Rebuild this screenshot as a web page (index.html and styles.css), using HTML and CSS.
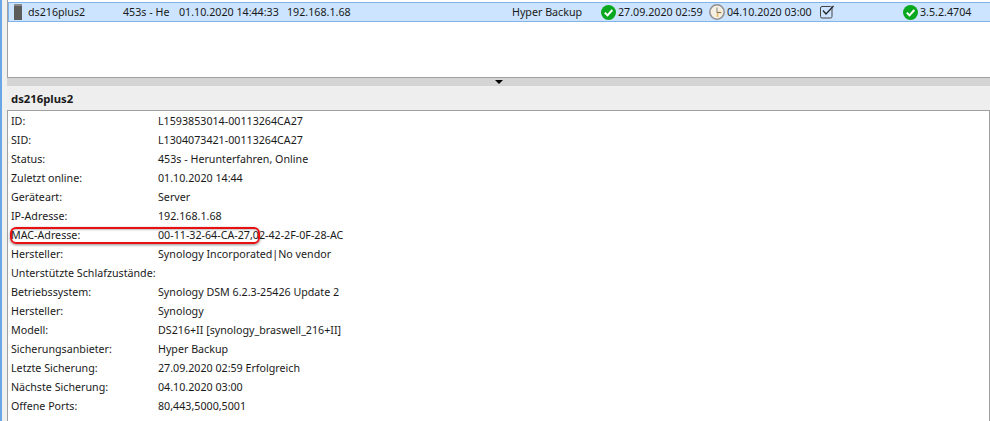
FILE: index.html
```html
<!DOCTYPE html>
<html lang="de">
<head>
  <meta charset="UTF-8" />
  <title>ds216plus2</title>
  <link rel="stylesheet" href="styles.css">
</head>
<body>
  <div class="app">
    <div class="list-panel">
      <div class="device-row">
        <span class="cell cell-name">
          <svg class="nas-icon" width="8" height="16" viewBox="0 0 8 16"><rect width="8" height="2" fill="#8a8a8a"/><rect y="2" width="8" height="14" fill="#5c5c5c"/></svg>
          ds216plus2
        </span>
        <span class="cell">453s - He</span>
        <span class="cell">01.10.2020 14:44:33</span>
        <span class="cell">192.168.1.68</span>
        <span class="cell">Hyper Backup</span>
        <span class="cell cell-icon">
          <svg width="15" height="15" viewBox="0 0 15 15"><circle cx="7.5" cy="7.5" r="7.5" fill="#0aa81e"/><path d="M3.8 7.6l2.7 2.8 4.8-5.4" fill="none" stroke="#fff" stroke-width="2"/></svg>
          27.09.2020 02:59
        </span>
        <span class="cell cell-icon">
          <svg width="16" height="16" viewBox="0 0 16 16"><circle cx="8" cy="8" r="7.2" fill="#f4efe2" stroke="#8f8f8f" stroke-width="1.5"/><path d="M8.5 8.5V13M8.5 8.5h4" fill="none" stroke="#e8b860" stroke-width="1.5"/><path d="M8 3.5v5h4" fill="none" stroke="#666" stroke-width="0.8"/></svg>
          04.10.2020 03:00
        </span>
        <span class="cell">
          <svg width="14" height="14" viewBox="0 0 14 14"><rect x="0.5" y="1.5" width="11.5" height="11.5" rx="1.5" fill="none" stroke="#444"/><path d="M3 5.5l3 3.5L13.5 1" fill="none" stroke="#222" stroke-width="1.2"/></svg>
        </span>
        <span class="cell cell-icon">
          <svg width="15" height="15" viewBox="0 0 15 15"><circle cx="7.5" cy="7.5" r="7.5" fill="#0aa81e"/><path d="M3.8 7.6l2.7 2.8 4.8-5.4" fill="none" stroke="#fff" stroke-width="2"/></svg>
          3.5.2.4704
        </span>
      </div>
    </div>
    <div class="splitter"><span class="arrow"></span></div>
    <div class="caption">ds216plus2</div>
    <div class="details">
      <div class="prop"><span>ID:</span><span>L1593853014-00113264CA27</span></div>
      <div class="prop"><span>SID:</span><span>L1304073421-00113264CA27</span></div>
      <div class="prop"><span>Status:</span><span>453s - Herunterfahren, Online</span></div>
      <div class="prop"><span>Zuletzt online:</span><span>01.10.2020 14:44</span></div>
      <div class="prop"><span>Geräteart:</span><span>Server</span></div>
      <div class="prop"><span>IP-Adresse:</span><span>192.168.1.68</span></div>
      <div class="prop prop-marked"><span>MAC-Adresse:</span><span>00-11-32-64-CA-27,02-42-2F-0F-28-AC</span><i class="ring"></i></div>
      <div class="prop"><span>Hersteller:</span><span>Synology Incorporated|No vendor</span></div>
      <div class="prop"><span>Unterstützte Schlafzustände:</span><span></span></div>
      <div class="prop"><span>Betriebssystem:</span><span>Synology DSM 6.2.3-25426 Update 2</span></div>
      <div class="prop"><span>Hersteller:</span><span>Synology</span></div>
      <div class="prop"><span>Modell:</span><span>DS216+II [synology_braswell_216+II]</span></div>
      <div class="prop"><span>Sicherungsanbieter:</span><span>Hyper Backup</span></div>
      <div class="prop"><span>Letzte Sicherung:</span><span>27.09.2020 02:59 Erfolgreich</span></div>
      <div class="prop"><span>Nächste Sicherung:</span><span>04.10.2020 03:00</span></div>
      <div class="prop"><span>Offene Ports:</span><span>80,443,5000,5001</span></div>
    </div>
  </div>
</body>
</html>
```

FILE: styles.css
```css
html, body {
  margin: 0;
  height: 421px;
  overflow: hidden;
}
body {
  background: #f0f0f0;
  border-left: 2px solid #6aa5e6;
  font-family: "Noto Sans", "Open Sans", sans-serif;
  font-size: 10.7px;
  color: #1a1a1a;
}
.app {
  margin-left: 5px;
  height: 421px;
  display: flex;
  flex-direction: column;
}
.list-panel {
  height: 78px;
  box-sizing: border-box;
  background: #fff;
  border-left: 1px solid #a0a0a0;
  border-bottom: 1px solid #a0a0a0;
  padding-top: 2px;
}
.device-row {
  height: 20px;
  box-sizing: border-box;
  background: #cce4ff;
  border: 1px solid #7eb4ea;
  border-right: 0;
  display: grid;
  grid-template-columns: 109px 56px 108px 225px 89px 108px 111px 83px 1fr;
  align-items: center;
  padding-left: 5px;
}
.cell {
  white-space: nowrap;
  display: flex;
  align-items: center;
}
.nas-icon {
  margin-right: 6px;
}
.cell-icon svg {
  margin-right: 2px;
}
.splitter {
  height: 8px;
  background: #d4d4d4;
  display: flex;
  justify-content: center;
  padding-top: 2px;
  box-sizing: border-box;
}
.arrow {
  width: 0;
  height: 0;
  border-left: 4px solid transparent;
  border-right: 4px solid transparent;
  border-top: 4px solid #000;
}
.caption {
  height: 24px;
  box-sizing: border-box;
  background: #eeeeee;
  padding: 5px 0 0 4px;
  font-weight: 700;
  font-size: 11.3px;
}
.details {
  flex: 1;
  background: #fff;
  border: 1px solid #a0a0a0;
  border-bottom: 0;
  padding-top: 1px;
}
.prop {
  display: grid;
  grid-template-columns: 147px 1fr;
  height: 19.04px;
  line-height: 19px;
  padding-left: 3px;
  position: relative;
  white-space: nowrap;
}
.ring {
  position: absolute;
  left: 2px;
  top: 1px;
  width: 246px;
  height: 13px;
  border: 2px solid #e81010;
  border-radius: 6px;
  box-shadow: 0 1px 3px rgba(0, 0, 0, 0.45), inset 0 1px 2px rgba(0, 0, 0, 0.25);
}
```
